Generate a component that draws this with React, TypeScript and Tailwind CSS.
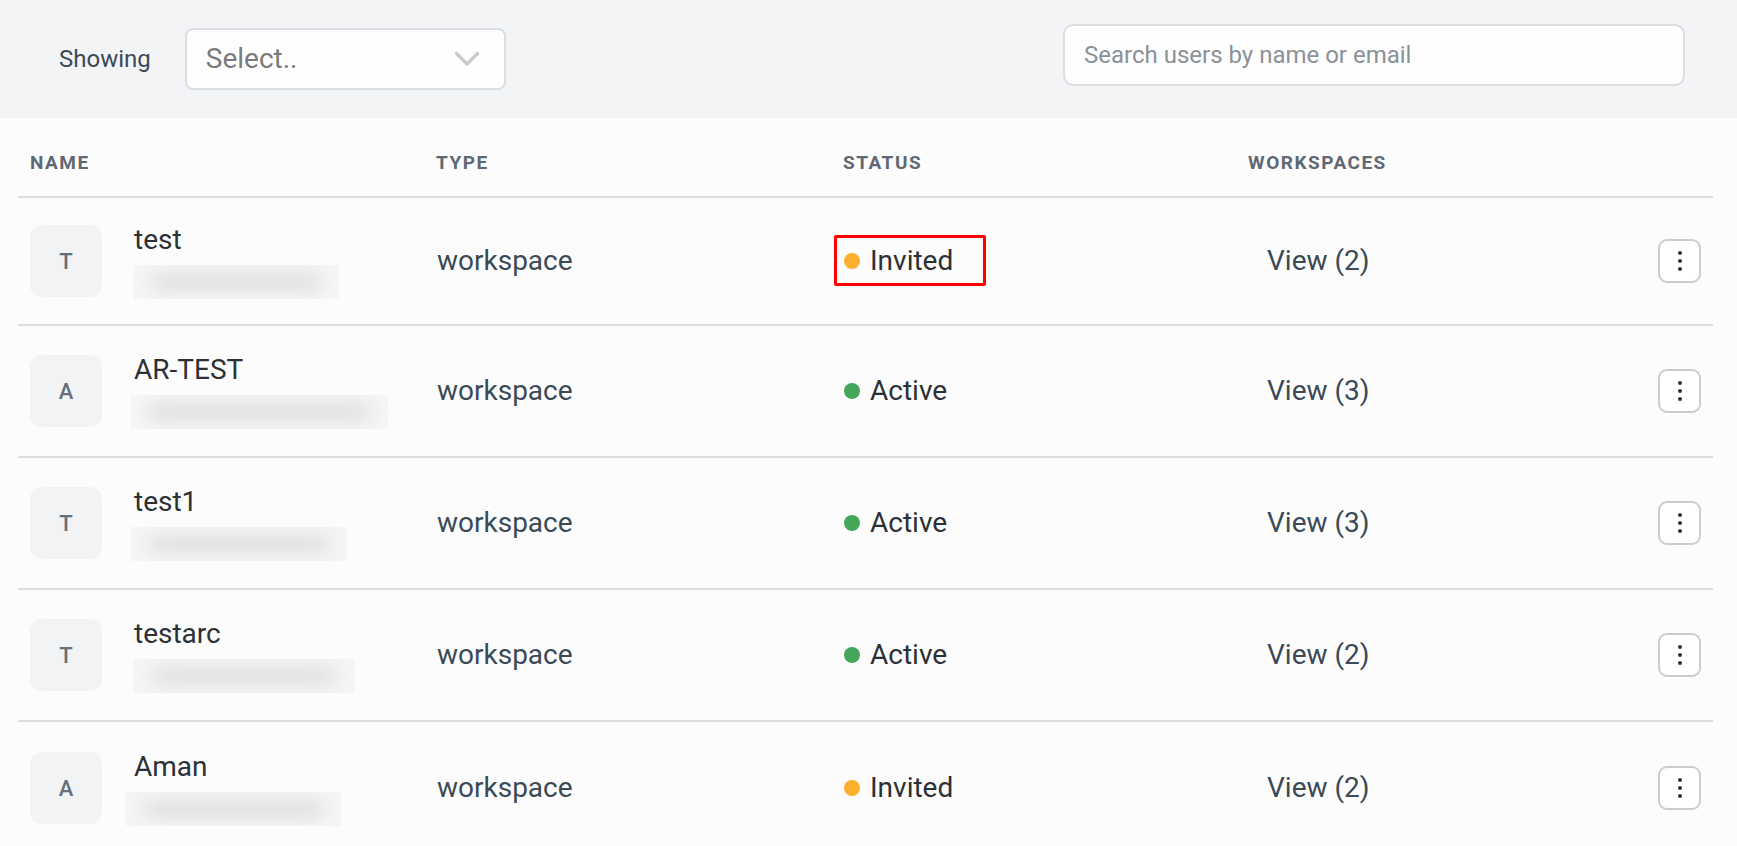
type Status = "Invited" | "Active";

interface UserRow {
    name: string;
    initial: string;
    type: string;
    status: Status;
    workspaces: number;
    emailWidth: number;
    emailShift: number;
    height: string;
    highlight?: boolean;
}

const users: UserRow[] = [
    { name: "test", initial: "T", type: "workspace", status: "Invited", workspaces: 2, emailWidth: 205, emailShift: 0, height: "h-[128px]", highlight: true },
    { name: "AR-TEST", initial: "A", type: "workspace", status: "Active", workspaces: 3, emailWidth: 257, emailShift: -3, height: "h-[132px]" },
    { name: "test1", initial: "T", type: "workspace", status: "Active", workspaces: 3, emailWidth: 215, emailShift: -3, height: "h-[132px]" },
    { name: "testarc", initial: "T", type: "workspace", status: "Active", workspaces: 2, emailWidth: 220, emailShift: 0, height: "h-[132px]" },
    { name: "Aman", initial: "A", type: "workspace", status: "Invited", workspaces: 2, emailWidth: 215, emailShift: -8, height: "h-[132px]" },
];

function BlurredEmail({ width, shift }: { width: number; shift: number }) {
    // emails are redacted in the screenshot, so just a soft grey smudge
    return (
        <div
            className="h-[34px] overflow-hidden bg-[#f5f5f6] px-[18px] py-[11px]"
            style={{ width, marginLeft: shift }}
        >
            <div className="h-full rounded-full bg-[#d4d6d8] blur-[9px]" />
        </div>
    );
}

function MenuButton() {
    return (
        <button className="flex h-[44px] w-[43px] flex-col items-center justify-center gap-[4px] rounded-[9px] border-2 border-[#c8cdd2] bg-white">
            <span className="h-[4px] w-[4px] rounded-full bg-[#2f3437]" />
            <span className="h-[4px] w-[4px] rounded-full bg-[#2f3437]" />
            <span className="h-[4px] w-[4px] rounded-full bg-[#2f3437]" />
        </button>
    );
}

function StatusCell({ status, highlight }: { status: Status; highlight?: boolean }) {
    const dot = status === "Invited" ? "bg-[#fbb02d]" : "bg-[#44a659]";
    return (
        <div className="relative flex items-center gap-[10px]">
            <span className={`h-[16px] w-[16px] rounded-full ${dot}`} />
            <span className="text-[28px] leading-[34px] text-[#2b3135]">{status}</span>
            {highlight && (
                <div className="absolute left-[-10px] top-[-9px] h-[51px] w-[152px] rounded-[2px] border-[3px] border-[#ff0000]" />
            )}
        </div>
    );
}

export default function App() {
    return (
        <div className="min-h-[846px] bg-[#fcfcfd] font-['Roboto','Liberation_Sans',sans-serif]">
            {/* Filter bar */}
            <div className="flex h-[118px] items-center bg-[#f3f4f6] pl-[59px] pr-[52px]">
                <span className="text-[24px] text-[#3a4a56]">Showing</span>
                <div className="ml-[34px] flex h-[62px] w-[321px] items-center justify-between rounded-[8px] border-2 border-[#dadde1] bg-[#fefefe] pl-[19px] pr-[24px]">
                    <span className="text-[28px] text-[#7b7b7b]">Select..</span>
                    <svg width="26" height="16" viewBox="0 0 26 16" fill="none">
                        <polyline points="2.5,2.5 13,13 23.5,2.5" stroke="#cbcbcb" strokeWidth="3.5" strokeLinecap="round" strokeLinejoin="round" />
                    </svg>
                </div>
                <div className="mb-[8px] ml-auto flex h-[62px] w-[622px] items-center rounded-[10px] border-2 border-[#dadde1] bg-[#fefefe] pl-[19px]">
                    <span className="text-[24px] text-[#8a9199]">Search users by name or email</span>
                </div>
            </div>

            {/* Users table */}
            <div className="ml-[18px] mr-[24px]">
                <div className="grid h-[80px] grid-cols-[406px_406px_406px_406px_1fr] items-center border-b-2 border-[#dadee2] pt-[12px] text-[19px] font-bold tracking-[1.5px] text-[#5f6873]">
                    <div className="pl-[12px]">NAME</div>
                    <div className="pl-[12px]">TYPE</div>
                    <div className="pl-[13px]">STATUS</div>
                    <div className="pl-[12px]">WORKSPACES</div>
                    <div />
                </div>

                {users.map((u, i) => (
                    <div
                        key={u.name}
                        className={`grid grid-cols-[406px_406px_406px_406px_1fr] items-center ${u.height} ${
                            i < users.length - 1 ? "border-b-2 border-[#dadee2]" : ""
                        }`}
                    >
                        <div className="flex items-center gap-[32px] pl-[12px]">
                            <div className="flex h-[72px] w-[72px] items-center justify-center rounded-[12px] bg-[#f2f3f5] text-[22px] font-medium text-[#66707a]">
                                {u.initial}
                            </div>
                            <div className="flex flex-col gap-[8px]">
                                <span className="text-[28px] leading-[34px] text-[#2b3135]">{u.name}</span>
                                <BlurredEmail width={u.emailWidth} shift={u.emailShift} />
                            </div>
                        </div>
                        <div className="pl-[13px] text-[28px] text-[#3b4a55]">{u.type}</div>
                        <div className="pl-[14px]">
                            <StatusCell status={u.status} highlight={u.highlight} />
                        </div>
                        <div className="pl-[31px] text-[28px] text-[#3b4a55]">View ({u.workspaces})</div>
                        <div className="flex justify-end pr-[12px]">
                            <MenuButton />
                        </div>
                    </div>
                ))}
            </div>
        </div>
    );
}
